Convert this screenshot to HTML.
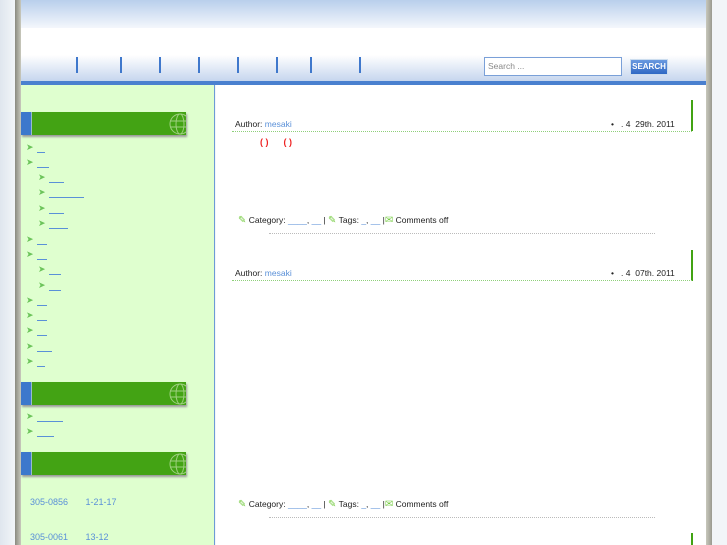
<!DOCTYPE html>
<html style="overflow:hidden;width:727px;height:545px"><head><meta charset="utf-8"><style>
*{margin:0;padding:0;box-sizing:border-box}
body{width:727px;height:545px;overflow:hidden;background:linear-gradient(90deg,#dfe6ee,#f2f5f8 15px);font-family:"Liberation Sans",sans-serif;font-size:8px;position:relative}
.abs{position:absolute}
.frame{left:15px;top:0;width:697px;height:545px;background:linear-gradient(90deg,#8a8a80,#c8c8bc 6px,transparent 6px,transparent 691px,#c8c8bc 691px,#9a9a90)}
.hdr{left:21px;top:0;width:685px;height:28px;background:linear-gradient(#b9cfec,#f4f7fc)}
.white{left:21px;top:28px;width:685px;height:28px;background:#fff}
.nav{left:21px;top:55px;width:685px;height:26px;background:linear-gradient(#fff,#c6d6ee)}
.navline{left:21px;top:81px;width:685px;height:4px;background:#4a80cf}
.sep{top:57px;width:2px;height:16px;background:#3f78cc}
.side{left:21px;top:85px;width:194px;height:460px;background:#dfffcf;border-right:1px solid #6c9bd6}
.main{left:216px;top:85px;width:490px;height:460px;background:#fff}
.wh{left:21px;width:165px;height:23px;background:#43a314;box-shadow:1px 2px 2px #999;overflow:hidden}
.wh:before{content:"";position:absolute;left:0;top:0;width:10px;height:23px;background:#3d78cc;border-right:1px solid #9bc}
.wh svg{position:absolute;right:0;top:1px}
.arr{color:#6cc45a;font-size:9px}
.ln{height:1px;background:#5a90d8}
.gb{left:691px;width:2px;height:31px;background:#41a313}
.dot{height:1px;border-top:1px dotted #8fd07a}
.t{color:#222;font-size:8.5px}
.b{color:#5a90d8}
</style></head><body>
<div class="abs frame"></div>
<div class="abs hdr"></div><div class="abs white"></div><div class="abs nav"></div><div class="abs navline"></div>
<div class="abs sep" style="left:76px"></div><div class="abs sep" style="left:120px"></div><div class="abs sep" style="left:159px"></div><div class="abs sep" style="left:198px"></div><div class="abs sep" style="left:237px"></div><div class="abs sep" style="left:276px"></div><div class="abs sep" style="left:310px"></div><div class="abs sep" style="left:359px"></div>
<div class="abs" style="left:484px;top:57px;width:138px;height:19px;background:#fff;border:1px solid #7aa0d8;color:#888;padding:3px 3px;font-size:8.5px">Search ...</div>
<div class="abs" style="left:630px;top:59px;width:38px;height:16px;background:linear-gradient(#6a9ae0,#2f68c4);border:1px solid #cde;color:#fff;font-size:8px;font-weight:bold;text-align:center;line-height:14px">SEARCH</div>
<div class="abs side"></div><div class="abs main"></div>
<div class="abs wh" style="top:112px"><svg width="20" height="22" viewBox="0 0 20 22" fill="none" stroke="#9fd080" stroke-width="1"><circle cx="14" cy="11" r="10"/><ellipse cx="14" cy="11" rx="4" ry="10"/><path d="M4 8h20M4 14h20"/></svg></div>
<div class="abs wh" style="top:382px"><svg width="20" height="22" viewBox="0 0 20 22" fill="none" stroke="#9fd080" stroke-width="1"><circle cx="14" cy="11" r="10"/><ellipse cx="14" cy="11" rx="4" ry="10"/><path d="M4 8h20M4 14h20"/></svg></div>
<div class="abs wh" style="top:452px"><svg width="20" height="22" viewBox="0 0 20 22" fill="none" stroke="#9fd080" stroke-width="1"><circle cx="14" cy="11" r="10"/><ellipse cx="14" cy="11" rx="4" ry="10"/><path d="M4 8h20M4 14h20"/></svg></div>
<div id="list"></div>
<div class="abs" style="left:30px;top:497px;color:#5a90d8;font-size:9px">305-0856&nbsp;&nbsp;&nbsp;&nbsp;&nbsp;&nbsp;&nbsp;1-21-17</div>
<div class="abs" style="left:30px;top:532px;color:#5a90d8;font-size:9px">305-0061&nbsp;&nbsp;&nbsp;&nbsp;&nbsp;&nbsp;&nbsp;13-12</div>
<div class="abs gb" style="top:100px"></div>
<div class="abs t" style="left:235px;top:119px">Author: <span class="b">mesaki</span></div>
<div class="abs t" style="left:611px;top:119px">•&nbsp;&nbsp;&nbsp;. 4&nbsp;&nbsp;29th. 2011</div>
<div class="abs dot" style="left:232px;top:131px;width:460px"></div>
<div class="abs" style="left:260px;top:137px;color:#e22;font-size:9px;font-weight:bold">( )&nbsp;&nbsp;&nbsp;&nbsp;&nbsp;&nbsp;( )</div>
<div class="abs t" style="left:238px;top:215px"><span style="color:#7c4;font-size:10px">✎</span> Category: <span class="b">____</span>, <span class="b">__</span> | <span style="color:#7c4;font-size:10px">✎</span> Tags: <span class="b">_</span>, <span class="b">__</span> |<span style="color:#7c4;font-size:10px">✉</span> Comments off</div>
<div class="abs dot" style="left:269px;top:233px;width:386px;border-color:#bbb"></div>
<div class="abs gb" style="top:250px"></div>
<div class="abs t" style="left:235px;top:268px">Author: <span class="b">mesaki</span></div>
<div class="abs t" style="left:611px;top:268px">•&nbsp;&nbsp;&nbsp;. 4&nbsp;&nbsp;07th. 2011</div>
<div class="abs dot" style="left:232px;top:280px;width:460px"></div>
<div class="abs t" style="left:238px;top:499px"><span style="color:#7c4;font-size:10px">✎</span> Category: <span class="b">____</span>, <span class="b">__</span> | <span style="color:#7c4;font-size:10px">✎</span> Tags: <span class="b">_</span>, <span class="b">__</span> |<span style="color:#7c4;font-size:10px">✉</span> Comments off</div>
<div class="abs dot" style="left:269px;top:517px;width:386px;border-color:#bbb"></div>
<div class="abs gb" style="top:533px;height:12px"></div>
<script>
var items=[[148,0,8],[163,0,12],[178,1,15],[193,1,35],[209,1,15],[224,1,19],[240,0,10],[255,0,10],[270,1,12],[286,1,12],[301,0,10],[316,0,10],[331,0,10],[347,0,15],[362,0,8],[417,0,26],[432,0,17]];
var h='';items.forEach(function(i){var x=i[1]?38:26;h+='<div class="abs arr" style="left:'+x+'px;top:'+(i[0]-6)+'px">➤</div><div class="abs ln" style="left:'+(x+11)+'px;top:'+(i[0]+4)+'px;width:'+i[2]+'px"></div>';});
document.getElementById('list').innerHTML=h;
</script>
</body></html>
